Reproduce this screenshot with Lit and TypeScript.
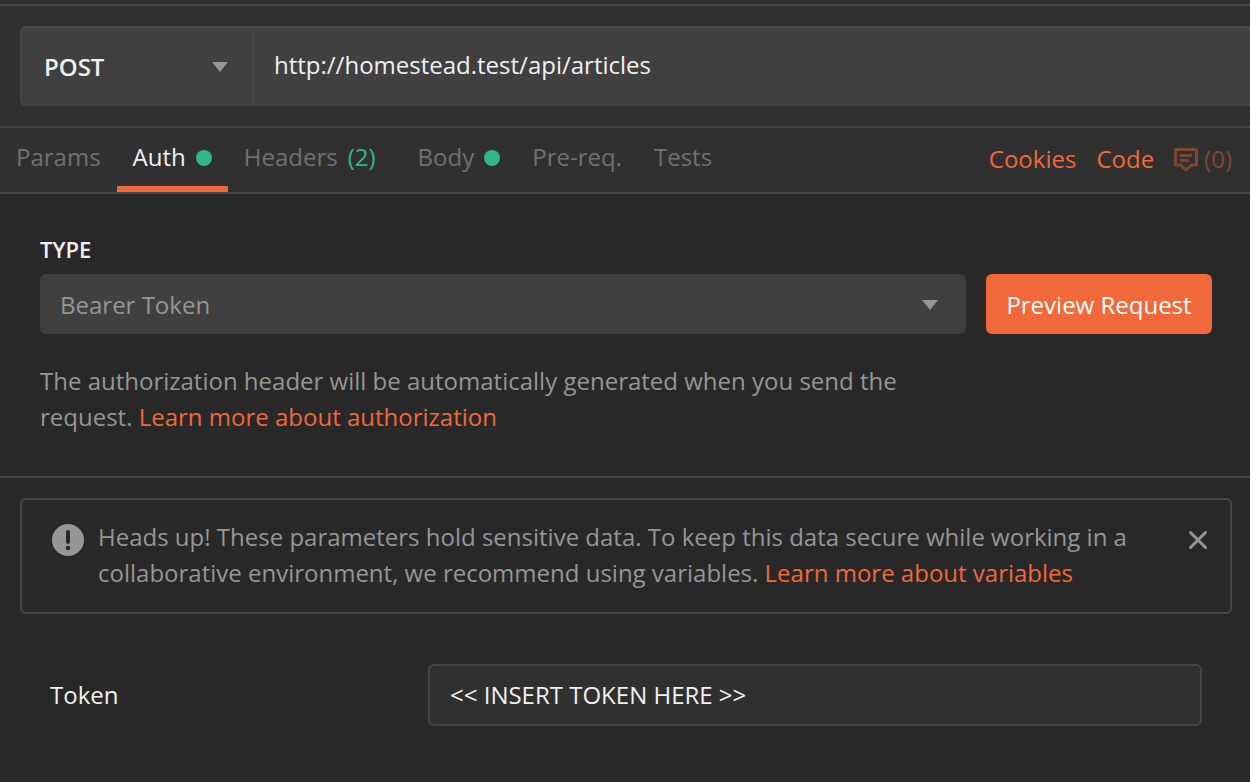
import { LitElement, html, css, nothing } from "lit";
import { customElement, state } from "lit/decorators.js";

interface Tab {
  id: string;
  label: string;
  count?: number;
  dot?: boolean;
}

const TABS: Tab[] = [
  { id: "params", label: "Params" },
  { id: "auth", label: "Auth", dot: true },
  { id: "headers", label: "Headers", count: 2 },
  { id: "body", label: "Body", dot: true },
  { id: "prereq", label: "Pre-req." },
  { id: "tests", label: "Tests" },
];

@customElement("app-root")
export class AppRoot extends LitElement {
  @state() private active = "auth";
  @state() private noticeOpen = true;

  static styles = css`
    :host {
      display: block;
      min-height: 100vh;
      background: #282828;
      color: #f0f0f0;
      font-family: "Open Sans", "Noto Sans", sans-serif;
      font-size: 24px;
      line-height: 36px;
      overflow-x: hidden;
    }
    * {
      box-sizing: border-box;
    }
    button,
    input,
    select {
      font: inherit;
      color: inherit;
      margin: 0;
      padding: 0;
      border: 0;
      background: none;
      border-radius: 0;
      outline-offset: -2px;
    }
    button,
    select {
      cursor: pointer;
    }
    select {
      appearance: none;
      width: 100%;
      height: 100%;
    }
    a {
      color: #f1693b;
      text-decoration: none;
    }
    p {
      margin: 0;
    }
    .top {
      background: #303030;
      padding-top: 4px;
    }
    .request {
      border-top: 2px solid #464646;
      padding: 20px 0 20px 20px;
    }
    .url-bar {
      display: flex;
      height: 80px;
      border: 2px solid #464646;
      border-right: 0;
      border-radius: 6px 0 0 6px;
      background: #404040;
      overflow: hidden;
    }
    .picker {
      position: relative;
      display: block;
    }
    .picker svg {
      position: absolute;
      top: 50%;
      margin-top: -4px;
      pointer-events: none;
    }
    .method {
      flex: 0 0 232px;
      border-right: 2px solid #464646;
    }
    .method select {
      padding: 2px 22px 0;
      font-weight: 600;
    }
    .method svg {
      right: 24px;
    }
    .url {
      flex: 1;
      min-width: 0;
      padding: 0 20px 2px;
    }
    .bar {
      display: flex;
      justify-content: space-between;
      height: 68px;
      border-top: 2px solid #464646;
      border-bottom: 2px solid #464646;
      padding-right: 18px;
    }
    .tabs {
      display: flex;
    }
    .tab {
      display: flex;
      align-items: center;
      gap: 10px;
      padding: 0 16px;
      border-bottom: 6px solid transparent;
      color: #707070;
      white-space: nowrap;
    }
    .tab.active {
      color: #f0f0f0;
      border-bottom-color: #f1693b;
    }
    .dot {
      width: 16px;
      height: 16px;
      margin-top: 2px;
      border-radius: 50%;
      background: #33b782;
    }
    .count {
      color: #33b782;
      padding-right: 10px;
    }
    .links {
      display: flex;
      align-items: center;
      gap: 20px;
      padding-bottom: 2px;
      white-space: nowrap;
    }
    .comments {
      display: flex;
      align-items: center;
      gap: 6px;
      color: #7e4530;
    }
    .comments svg {
      margin-top: 2px;
    }
    svg {
      display: block;
      flex: none;
    }
    .auth {
      display: grid;
      grid-template-columns: 1fr auto;
      column-gap: 20px;
      padding: 37px 38px 41px 40px;
      border-bottom: 2px solid #464646;
    }
    .type-label {
      grid-column: 1 / -1;
      font-size: 22px;
      font-weight: 600;
      padding-bottom: 7px;
    }
    .type {
      height: 60px;
      border-radius: 6px;
      background: #404040;
      color: #969696;
    }
    .type select {
      padding: 2px 20px 0;
    }
    .type svg {
      right: 28px;
    }
    .preview {
      height: 60px;
      min-width: 226px;
      padding: 2px 20px 0;
      border-radius: 6px;
      background: #f1693b;
      color: #fff;
    }
    .help {
      grid-column: 1;
      padding-top: 29px;
      color: #969696;
    }
    .details {
      padding: 20px 18px 20px 20px;
    }
    .notice {
      display: flex;
      align-items: flex-start;
      gap: 14px;
      padding: 19px 22px 21px 30px;
      margin-bottom: 50px;
      border: 2px solid #464646;
      border-radius: 6px;
      color: #969696;
    }
    .notice p {
      flex: 1;
    }
    .badge {
      margin-top: 5px;
    }
    .close {
      margin-top: 11px;
    }
    .field {
      display: grid;
      grid-template-columns: 378px 1fr;
      align-items: center;
      padding: 0 30px;
    }
    .token {
      height: 62px;
      min-width: 0;
      padding: 0 20px 2px;
      border: 2px solid #464646;
      border-radius: 6px;
      background: #303030;
    }
  `;

  private arrow() {
    return html`<svg width="16" height="10" viewBox="0 0 16 10" aria-hidden="true">
      <path d="M0 0H16L8 10Z" fill="#969696" />
    </svg>`;
  }

  private renderTab(tab: Tab) {
    const on = tab.id === this.active;
    return html`<button
      class="tab ${on ? "active" : ""}"
      role="tab"
      aria-selected=${on ? "true" : "false"}
      @click=${() => (this.active = tab.id)}
    ><span>${tab.label}</span>${tab.dot ? html`<span class="dot"></span>` : nothing}${tab.count
        ? html`<span class="count">(${tab.count})</span>`
        : nothing}</button>`;
  }

  private renderNotice() {
    return html`<div class="notice" role="note">
      <svg class="badge" width="32" height="32" viewBox="0 0 32 32" aria-hidden="true">
        <circle cx="16" cy="16" r="16" fill="#969696" />
        <path d="M16 8V18" stroke="#282828" stroke-width="4" stroke-linecap="round" />
        <circle cx="16" cy="24" r="2.2" fill="#282828" />
      </svg>
      <p>
        Heads up! These parameters hold sensitive data. To keep this data secure while working in a
        collaborative environment, we recommend using variables.
        <a href="#variables">Learn more about variables</a>
      </p>
      <button class="close" aria-label="Dismiss" @click=${() => (this.noticeOpen = false)}>
        <svg width="20" height="20" viewBox="0 0 20 20" aria-hidden="true">
          <path d="M2.5 2.5L17.5 17.5M17.5 2.5L2.5 17.5" stroke="#969696" stroke-width="3" stroke-linecap="round" />
        </svg>
      </button>
    </div>`;
  }

  render() {
    return html`
      <header class="top">
        <div class="request">
          <div class="url-bar">
            <div class="picker method">
              <select aria-label="Method">
                <option selected>POST</option>
                <option>GET</option>
                <option>PUT</option>
                <option>DELETE</option>
              </select>
              ${this.arrow()}
            </div>
            <input class="url" type="text" aria-label="Request URL" value="http://homestead.test/api/articles" />
          </div>
        </div>
        <nav class="bar">
          <div class="tabs" role="tablist">${TABS.map((t) => this.renderTab(t))}</div>
          <div class="links">
            <a href="#cookies">Cookies</a>
            <a href="#code">Code</a>
            <a class="comments" href="#comments" aria-label="Comments (0)">
              <svg width="24" height="24" viewBox="0 0 24 24" aria-hidden="true">
                <path
                  d="M1.5 1.5H22.5V17H17.5L12 22L6.5 17H1.5Z"
                  fill="none"
                  stroke="currentColor"
                  stroke-width="3"
                  stroke-linejoin="round"
                />
                <path d="M6 6H18V9H6ZM6 11H15V14H6Z" fill="currentColor" />
              </svg>
              <span>(0)</span>
            </a>
          </div>
        </nav>
      </header>
      <main>
        <section class="auth">
          <label class="type-label" for="type">TYPE</label>
          <div class="picker type">
            <select id="type">
              <option selected>Bearer Token</option>
              <option>Basic Auth</option>
              <option>No Auth</option>
            </select>
            ${this.arrow()}
          </div>
          <button class="preview">Preview Request</button>
          <p class="help">
            The authorization header will be automatically generated when you send the request.
            <a href="#authorization">Learn more about authorization</a>
          </p>
        </section>
        <section class="details">
          ${this.noticeOpen ? this.renderNotice() : nothing}
          <div class="field">
            <label for="token">Token</label>
            <input id="token" class="token" type="text" value="&lt;&lt; INSERT TOKEN HERE &gt;&gt;" />
          </div>
        </section>
      </main>
    `;
  }
}
